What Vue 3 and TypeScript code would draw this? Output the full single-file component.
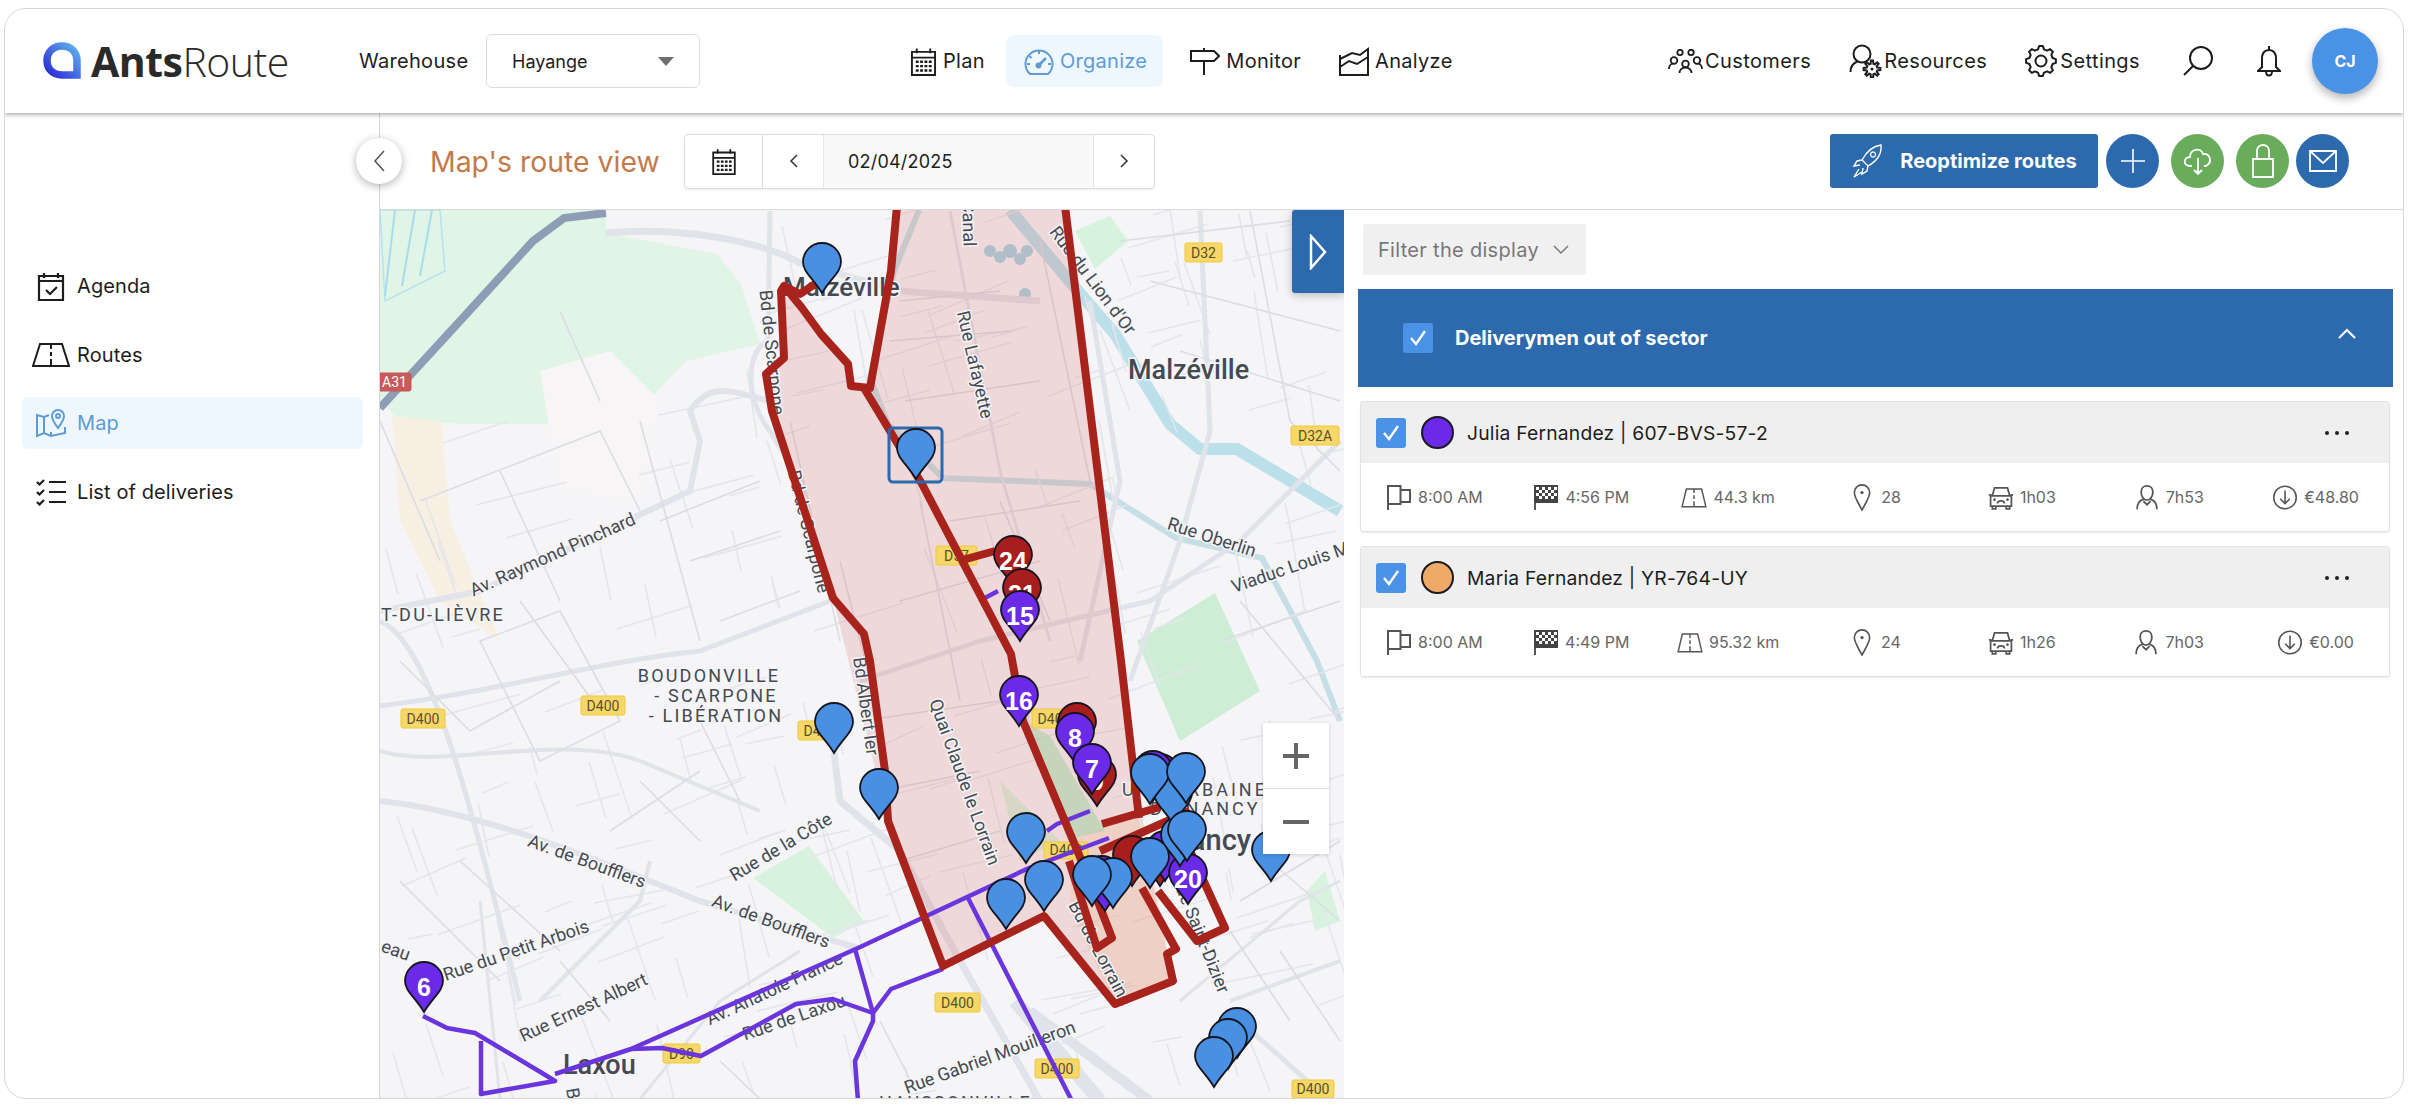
<script setup lang="ts">
interface Pin { x: number; y: number; color: string; label?: string }
interface Road { d: string; w?: number }
interface MapLabel { text: string; x: number; y: number; rot?: number; size?: number; weight?: number; spacing?: number; anchor?: string }
interface Badge { text: string; x: number; y: number; w: number; h: number; red?: boolean }

const BLUE = '#4a90e2'
const PURPLE = '#6a2ae8'
const RED = '#a81e1e'

const sideItems = [
  { id: 'agenda', label: 'Agenda' },
  { id: 'routes', label: 'Routes' },
  { id: 'map', label: 'Map', active: true },
  { id: 'list', label: 'List of deliveries' },
]

const drivers = [
  {
    name: 'Julia Fernandez | 607-BVS-57-2',
    color: '#6a2ae8',
    stats: [
      { icon: 'i-flag', value: '8:00 AM' },
      { icon: 'i-finish', value: '4:56 PM' },
      { icon: 'i-road', value: '44.3 km' },
      { icon: 'i-pin', value: '28' },
      { icon: 'i-car', value: '1h03' },
      { icon: 'i-person', value: '7h53' },
      { icon: 'i-down', value: '€48.80' },
    ],
  },
  {
    name: 'Maria Fernandez | YR-764-UY',
    color: '#eeaa66',
    stats: [
      { icon: 'i-flag', value: '8:00 AM' },
      { icon: 'i-finish', value: '4:49 PM' },
      { icon: 'i-road', value: '95.32 km' },
      { icon: 'i-pin', value: '24' },
      { icon: 'i-car', value: '1h26' },
      { icon: 'i-person', value: '7h03' },
      { icon: 'i-down', value: '€0.00' },
    ],
  },
]

// toothed outline shared by the two gear icons
const gearPath = (cx: number, cy: number, inner: number, outer: number, teeth: number) => {
  const pts: string[] = []
  const step = (Math.PI * 2) / teeth
  for (let i = 0; i < teeth; i++) {
    const a = i * step
    const corners: [number, number][] = [
      [inner, a - step * 0.32],
      [outer, a - step * 0.16],
      [outer, a + step * 0.16],
      [inner, a + step * 0.32],
    ]
    for (const [r, t] of corners) {
      pts.push(`${(cx + r * Math.cos(t)).toFixed(1)} ${(cy + r * Math.sin(t)).toFixed(1)}`)
    }
  }
  return 'M' + pts.join('L') + 'Z'
}

const settingsGear = gearPath(16, 16, 12, 15, 8)
const resourceGear = gearPath(23, 25, 5.5, 8.5, 8)

// the map svg uses the page coordinates as its viewBox, easier to compare
const roads: Road[] = [
  { d: 'M606 232 C680 225 760 240 800 262 L900 290 L1040 300', w: 7 },
  { d: 'M770 210 L768 340 C745 350 745 400 770 430 L800 480', w: 5 },
  { d: 'M380 620 C430 640 470 800 520 1000', w: 5 },
  { d: 'M380 610 L480 590 L690 490 L700 440 L690 410 C710 380 730 390 770 400', w: 6 },
  { d: 'M380 800 C480 810 600 860 700 900 L858 947', w: 6 },
  { d: 'M380 750 C440 770 560 730 640 760 L760 810', w: 4 },
  { d: 'M380 705 C500 690 600 660 700 650 L830 600', w: 5 },
  { d: 'M834 752 L840 800 L900 850 L960 960 L1040 1100', w: 7 },
  { d: 'M1015 1000 L1100 1100', w: 14 },
  { d: 'M1030 1010 L1150 1100', w: 10 },
  { d: 'M1090 300 L1120 480 L1080 660', w: 5 },
  { d: 'M1200 210 L1210 430 L1180 540 L1130 680', w: 5 },
  { d: 'M1340 440 L1240 540 L1150 600 L980 640 L860 680', w: 5 },
  { d: 'M950 210 L1000 470 L1050 640', w: 3 },
  { d: 'M1230 1000 L1340 960', w: 4 },
  { d: 'M1240 1020 L1330 1100', w: 5 },
  { d: 'M1180 1000 L1300 900 L1340 880', w: 3 },
  { d: 'M540 1000 L640 900 L650 860', w: 4 },
  { d: 'M480 900 L500 1098', w: 3 },
  { d: 'M640 1098 L720 1000 L800 950', w: 3 },
]

const thinRoads = [
  'M480 640 L560 610 L620 720 L540 760Z', 'M520 600 L600 710', 'M400 660 L470 730 L560 680',
  'M640 420 L700 640', 'M660 520 L760 480', 'M690 560 L780 530', 'M720 620 L800 590',
  'M420 500 L600 430 L640 510', 'M440 560 L380 420', 'M500 470 L560 600', 'M600 400 L560 310',
  'M1120 240 L1290 220', 'M1150 280 L1340 330', 'M1180 350 L1340 400', 'M1250 210 L1290 420 L1340 470',
  'M1240 600 L1340 720', 'M1220 640 L1340 600', 'M1270 860 L1340 920', 'M1240 900 L1340 840',
  'M1230 930 L1290 1020', 'M1280 950 L1340 1040', 'M700 720 L740 800', 'M640 780 L700 840', 'M700 770 L610 830',
  'M460 860 L560 950', 'M400 880 L500 980', 'M560 960 L610 1020', 'M720 1060 L760 1098', 'M880 1020 L920 1098',
  'M900 300 L1000 290', 'M890 340 L1010 330', 'M905 400 L1040 380', 'M950 520 L1080 500', 'M900 600 L1040 560',
  'M860 720 L1000 700', 'M880 790 L980 770', 'M900 860 L1000 830', 'M840 560 L880 720', 'M920 500 L960 700',
  'M1040 240 L1090 480', 'M1000 500 L1050 620', 'M790 420 L840 640',
]

// small side streets, seeded so that every run draws the same map
const buildStreets = () => {
  let seed = 4217
  const rnd = () => {
    seed = (seed * 16807) % 2147483647
    return seed / 2147483647
  }
  const out: string[] = []
  for (let i = 0; i < 260; i++) {
    const x = 380 + rnd() * 964
    const y = 209 + rnd() * 889
    const angle = ((rnd() > 0.5 ? -24 : 68) + rnd() * 14) * (Math.PI / 180)
    const len = 24 + rnd() * 70
    if (x < 720 && y < 410) continue
    out.push(`M${x.toFixed(0)} ${y.toFixed(0)}L${(x + Math.cos(angle) * len).toFixed(0)} ${(y + Math.sin(angle) * len).toFixed(0)}`)
  }
  return out
}
const streets = buildStreets()

const labels: MapLabel[] = [
  { text: 'Malzéville', x: 1128, y: 378, size: 27, weight: 500 },
  { text: 'Malzéville', x: 783, y: 295, size: 26, weight: 500 },
  { text: 'Laxou', x: 563, y: 1073, size: 27, weight: 500 },
  { text: 'Nancy', x: 1251, y: 849, size: 29, weight: 500, anchor: 'end' },
  { text: 'BOUDONVILLE', x: 709, y: 681, size: 18, spacing: 2.2, anchor: 'middle' },
  { text: '- SCARPONE', x: 716, y: 701, size: 18, spacing: 2.2, anchor: 'middle' },
  { text: '- LIBÉRATION', x: 716, y: 721, size: 18, spacing: 2.2, anchor: 'middle' },
  { text: 'T-DU-LIÈVRE', x: 505, y: 620, size: 18, spacing: 2.2, anchor: 'end' },
  { text: 'UNE URBAINE', x: 1122, y: 795, size: 18, spacing: 3 },
  { text: 'DE NANCY', x: 1150, y: 814, size: 18, spacing: 3 },
  { text: 'HAUSSONVILLE', x: 879, y: 1108, size: 18, spacing: 2 },
  { text: 'Av. Raymond Pinchard', x: 555, y: 559, rot: -24, anchor: 'middle' },
  { text: 'Rue Oberlin', x: 1210, y: 542, rot: 18, anchor: 'middle' },
  { text: 'Viaduc Louis Marin', x: 1234, y: 592, rot: -19 },
  { text: 'Rue Lafayette', x: 969, y: 365, rot: 77, anchor: 'middle' },
  { text: 'Bd de Scarpone', x: 766, y: 352, rot: 84, anchor: 'middle' },
  { text: 'Bd de Scarpone', x: 803, y: 532, rot: 76, anchor: 'middle' },
  { text: 'Bd Albert Ier', x: 860, y: 706, rot: 82, anchor: 'middle' },
  { text: "Rue du Lion d'Or", x: 1088, y: 283, rot: 53, anchor: 'middle' },
  { text: 'Canal', x: 962, y: 200, rot: 88 },
  { text: 'Quai Claude le Lorrain', x: 959, y: 783, rot: 70, anchor: 'middle' },
  { text: 'Av. de Boufflers', x: 585, y: 866, rot: 20, anchor: 'middle' },
  { text: 'Av. de Boufflers', x: 769, y: 926, rot: 20, anchor: 'middle' },
  { text: 'Rue de la Côte', x: 784, y: 851, rot: -31, anchor: 'middle' },
  { text: 'Rue du Petit Arbois', x: 518, y: 955, rot: -19, anchor: 'middle' },
  { text: 'Rue Ernest Albert', x: 586, y: 1012, rot: -25, anchor: 'middle' },
  { text: 'Av. Anatole France', x: 777, y: 993, rot: -25, anchor: 'middle' },
  { text: 'Rue de Laxou', x: 796, y: 1022, rot: -19, anchor: 'middle' },
  { text: 'Rue Gabriel Mouilleron', x: 992, y: 1062, rot: -20, anchor: 'middle' },
  { text: 'Rue Saint-Dizier', x: 1195, y: 935, rot: 68, anchor: 'middle' },
  { text: 'Bd de Lorraine', x: 1095, y: 955, rot: 62, anchor: 'middle' },
  { text: 'eau', x: 380, y: 950, rot: 20 },
  { text: 'Bd', x: 566, y: 1088, rot: 80 },
]

const badges: Badge[] = [
  { text: 'D32', x: 1185, y: 242, w: 37, h: 19 },
  { text: 'D32A', x: 1291, y: 425, w: 48, h: 19 },
  { text: 'A31', x: 378, y: 372, w: 33, h: 18, red: true },
  { text: 'D57', x: 936, y: 545, w: 41, h: 19 },
  { text: 'D400', x: 401, y: 708, w: 44, h: 19 },
  { text: 'D400', x: 581, y: 695, w: 44, h: 19 },
  { text: 'D400', x: 798, y: 720, w: 44, h: 19 },
  { text: 'D400', x: 1044, y: 841, w: 44, h: 17 },
  { text: 'D400', x: 1032, y: 708, w: 44, h: 19 },
  { text: 'D400', x: 935, y: 992, w: 45, h: 19 },
  { text: 'D90', x: 663, y: 1043, w: 37, h: 19 },
  { text: 'D400', x: 1035, y: 1058, w: 44, h: 19 },
  { text: 'D400', x: 1292, y: 1079, w: 42, h: 18 },
]

// drawn in this order, the last ones end up on top
const pins: Pin[] = [
  { x: 1013, y: 585, color: RED, label: '24' },
  { x: 1022, y: 618, color: RED, label: '21' },
  { x: 1020, y: 640, color: PURPLE, label: '15' },
  { x: 1077, y: 752, color: RED },
  { x: 1019, y: 725, color: PURPLE, label: '16' },
  { x: 1097, y: 805, color: RED, label: '9' },
  { x: 1075, y: 762, color: PURPLE, label: '8' },
  { x: 1092, y: 793, color: PURPLE, label: '7' },
  { x: 1160, y: 803, color: PURPLE },
  { x: 1153, y: 800, color: PURPLE },
  { x: 1132, y: 885, color: RED },
  { x: 1160, y: 885, color: RED },
  { x: 1102, y: 905, color: PURPLE },
  { x: 1105, y: 910, color: PURPLE },
  { x: 1165, y: 880, color: PURPLE },
  { x: 1188, y: 903, color: PURPLE, label: '20' },
  { x: 1180, y: 865, color: BLUE },
  { x: 1173, y: 823, color: BLUE },
  { x: 1150, y: 803, color: BLUE },
  { x: 1186, y: 802, color: BLUE },
  { x: 1187, y: 860, color: BLUE },
  { x: 1150, y: 887, color: BLUE },
  { x: 822, y: 292, color: BLUE },
  { x: 916, y: 478, color: BLUE },
  { x: 834, y: 752, color: BLUE },
  { x: 879, y: 818, color: BLUE },
  { x: 1026, y: 862, color: BLUE },
  { x: 1006, y: 928, color: BLUE },
  { x: 1044, y: 910, color: BLUE },
  { x: 1113, y: 907, color: BLUE },
  { x: 1092, y: 905, color: BLUE },
  { x: 1271, y: 880, color: BLUE },
  { x: 1237, y: 1057, color: BLUE },
  { x: 1228, y: 1068, color: BLUE },
  { x: 1214, y: 1086, color: BLUE },
  { x: 424, y: 1011, color: PURPLE, label: '6' },
]

const purpleRoutes = [
  'M423 1015 L447 1027 L475 1032 L542 1072 L555 1080 L481 1093 L481 1040',
  'M555 1073 L631 1048 L858 947 L1029 867 L1109 837',
  'M631 1048 L662 1047 L701 1055 L796 1003 L833 998 L873 1012 L891 988 L943 968',
  'M855 948 L873 1012 L873 1020 L855 1060 L858 1100',
  'M968 897 L1072 1100',
  'M1047 830 L1057 823 L1090 810',
  'M983 598 L998 590',
]

const redRoutes = [
  'M897 205 L891 270 L870 387 L851 385 L848 363 L821 333 L802 307 L784 285 L781 290 L784 357 L766 373 L772 410 L833 597 L864 633 L870 660 L885 770 L888 820 L943 965 L1044 915 L1115 1003 L1173 980 L1167 953 L1176 948 L1142 887',
  'M1065 205 L1121 660 L1139 817',
  'M864 387 L922 483 L1011 653 L1023 720 L1072 837 L1090 880 L1112 937 L1097 947 L1069 860',
  'M1102 823 L1160 806',
  'M1100 850 L1190 810',
  'M1158 890 L1197 940 L1225 927 L1190 850',
  'M959 560 L995 550',
  'M784 285 L800 293 L815 283',
]
</script>

<template>
  <div class="window">
    <svg class="defs" width="0" height="0">
      <defs>
        <symbol id="i-calendar" viewBox="0 0 28 30">
          <path d="M2 5h24v24H2zM2 5h24v6H2zM7 1.500v5M21 1.500v5" fill="none" stroke="currentColor" stroke-width="2" />
          <path d="M6 14h3v2.500H6zM10.500 14h3v2.500h-3zM15 14h3v2.500h-3zM19.500 14h3v2.500h-3zM6 18.500h3V21H6zM10.500 18.500h3V21h-3zM15 18.500h3V21h-3zM19.500 18.500h3V21h-3zM6 23h3v2.500H6zM10.500 23h3v2.500h-3zM15 23h3v2.500h-3zM19.500 23h3v2.500h-3z" fill="currentColor" />
        </symbol>
        <symbol id="i-flag" viewBox="0 0 26 27">
          <path d="M2 26V2h12.500v18H2M14.500 6H24v12H14.500" fill="none" stroke="currentColor" stroke-width="2" />
        </symbol>
        <symbol id="i-finish" viewBox="0 0 26 27">
          <path d="M2 26V2" fill="none" stroke="currentColor" stroke-width="2" />
          <path d="M1 1h24v18H1z" fill="#444" />
          <path d="M3 3h3v3H3zM9 3h3v3H9zM15 3h3v3h-3zM21 3h3v3h-3zM6 6h3v3H6zM12 6h3v3h-3zM18 6h3v3h-3zM3 9h3v3H3zM9 9h3v3H9zM15 9h3v3h-3zM21 9h3v3h-3zM6 12h3v3H6zM12 12h3v3h-3zM18 12h3v3h-3z" fill="#fff" />
        </symbol>
        <symbol id="i-road" viewBox="0 0 34 26">
          <path d="M1.500 25L7 2h20l5.500 23zM17 3v4M17 10v5M17 18v7" fill="none" stroke="currentColor" stroke-width="1.900" />
        </symbol>
        <symbol id="i-pin" viewBox="0 0 20 30">
          <path d="M10 29C6 21 1.500 15 1.500 9.500a8.500 8.500 0 0 1 17 0C18.500 15 14 21 10 29z" fill="none" stroke="currentColor" stroke-width="1.800" />
          <circle cx="10" cy="9.500" r="1.800" fill="currentColor" />
        </symbol>
        <symbol id="i-car" viewBox="0 0 30 28">
          <path d="M5 12l2.500-9h15L25 12M3 12h24v12H3zM5 24v3h4v-3M21 24v3h4v-3M1 11h3M26 11h3M11 21c0-4 8-4 8 0" fill="none" stroke="currentColor" stroke-width="2" />
          <circle cx="7.500" cy="16.500" r="1.500" fill="currentColor" /><circle cx="22.500" cy="16.500" r="1.500" fill="currentColor" />
        </symbol>
        <symbol id="i-person" viewBox="0 0 26 30">
          <path d="M13 2c-4 0-6.500 3-6.500 7S9 18 13 18s6.500-5 6.500-9S17 2 13 2zM9 17c-4 1-7 4-7 11M17 17c4 1 7 4 7 11M9 19l4 4 4-4" fill="none" stroke="currentColor" stroke-width="2" />
        </symbol>
        <symbol id="i-down" viewBox="0 0 30 30">
          <circle cx="15" cy="15" r="13" fill="none" stroke="currentColor" stroke-width="1.800" />
          <path d="M15 7v15M9.500 16.500L15 22l5.500-5.500" fill="none" stroke="currentColor" stroke-width="1.800" />
        </symbol>
      </defs>
    </svg>

    <header class="topbar">
      <div class="logo">
        <svg width="40" height="38" viewBox="0 0 40 38">
          <defs>
            <linearGradient id="logoGrad" x1="0" y1="1" x2="1" y2="0">
              <stop offset="0" stop-color="#2a27d6" />
              <stop offset="1" stop-color="#5fb3ec" />
            </linearGradient>
          </defs>
          <path d="M20 4C11 4 5 10 5 18.500S11 33 20 33h15V18.500C35 10 29 4 20 4z" fill="none" stroke="url(#logoGrad)" stroke-width="7.500" />
        </svg>
        <span class="logo-text"><b>Ants</b>Route</span>
      </div>
      <span class="warehouse-label">Warehouse</span>
      <div class="select">
        <span>Hayange</span>
        <i class="caret"></i>
      </div>

      <nav class="main-nav">
        <a class="nav-item">
          <svg width="27" height="29"><use href="#i-calendar" /></svg>
          Plan
        </a>
        <a class="nav-item active">
          <svg width="30" height="30" viewBox="0 0 30 30" fill="none" stroke="currentColor" stroke-width="2">
            <path d="M6 28h18a13.500 13.500 0 1 0-18 0z" />
            <path d="M15 19l7-7" stroke-width="2.500" />
            <circle cx="14.500" cy="19.500" r="2" fill="currentColor" />
            <path d="M15 5v3M5.500 10l2 2M3 18h3M24 18h3" />
          </svg>
          Organize
        </a>
        <a class="nav-item">
          <svg width="30" height="28" viewBox="0 0 30 28" fill="none" stroke="currentColor" stroke-width="2">
            <path d="M1 4h23l5 5-5 5H1zM14 1v3M14 14v14" />
          </svg>
          Monitor
        </a>
        <a class="nav-item">
          <svg width="30" height="29" viewBox="0 0 30 29" fill="none" stroke="currentColor" stroke-width="2">
            <path d="M1 8v20h28V2l-8 6-8-2-12 6M1 20l9-6 8 3 11-7" />
          </svg>
          Analyze
        </a>
      </nav>

      <nav class="side-nav">
        <a class="nav-item">
          <svg width="35" height="25" viewBox="0 0 35 25" fill="none" stroke="#1d1d1d" stroke-width="1.800">
            <circle cx="12" cy="3.500" r="2.700" /><circle cx="23" cy="3.500" r="2.700" />
            <circle cx="6" cy="11.500" r="3.300" /><circle cx="29" cy="11.500" r="3.300" /><circle cx="17.500" cy="15" r="3.300" />
            <path d="M1 20c0-3 2-5 4-5.500M34 20c0-3-2-5-4-5.500M11.500 24c0-3 2.500-5.500 6-5.500s6 2.500 6 5.500" />
          </svg>
          Customers
        </a>
        <a class="nav-item">
          <svg width="33" height="34" viewBox="0 0 33 34" fill="none" stroke="#1d1d1d" stroke-width="2">
            <circle cx="13" cy="10" r="8.500" />
            <path d="M1.500 28c0-6 3-9 7-10.500" />
            <path :d="resourceGear" stroke-width="2" />
            <circle cx="23" cy="25" r="1.500" fill="#1d1d1d" stroke="none" />
          </svg>
          Resources
        </a>
        <a class="nav-item">
          <svg width="33" height="32" viewBox="0 0 33 32" fill="none" stroke="#1d1d1d" stroke-width="2" stroke-linejoin="round">
            <path :d="settingsGear" />
            <circle cx="16" cy="16" r="5.500" />
          </svg>
          Settings
        </a>
        <svg class="tool-icon" width="32" height="32" viewBox="0 0 32 32" fill="none" stroke="#1d1d1d" stroke-width="2">
          <circle cx="19" cy="13" r="11" /><path d="M11 21L2 30" />
        </svg>
        <svg class="tool-icon bell" width="24" height="33" viewBox="0 0 24 33" fill="none" stroke="#1d1d1d" stroke-width="2">
          <path d="M12 1v4M12 5c-5 0-7 4-7 9v8l-4 4h22l-4-4v-8c0-5-2-9-7-9zM9 26c0 6 6 6 6 0" />
        </svg>
        <div class="avatar">CJ</div>
      </nav>
    </header>

    <div class="body">
      <aside class="sidebar">
        <a v-for="item in sideItems" :key="item.id" class="side-item" :class="{ active: item.active }">
          <span class="side-icon">
            <svg v-if="item.id === 'agenda'" width="28" height="29" viewBox="0 0 28 29" fill="none" stroke="currentColor" stroke-width="2.200">
              <path d="M2 4h24v24H2zM2 9h24M7 1v5M21 1v5" /><path d="M9 18l4 4 7-7" />
            </svg>
            <svg v-else-if="item.id === 'routes'" width="38" height="25" viewBox="0 0 38 25" fill="none" stroke="currentColor" stroke-width="2">
              <path d="M1 24L8 2h22l7 22zM19 3v4M19 10v4M19 17v7" />
            </svg>
            <svg v-else-if="item.id === 'map'" width="30" height="30" viewBox="0 0 30 30" fill="none" stroke="currentColor" stroke-width="2">
              <path d="M13 7L8 9 1 7v21l7-3 7 3 14-3v-6M8 9v16M15 24v4" />
              <path d="M22 20c-3-4-6-8-6-12a6 6 0 0 1 12 0c0 4-3 8-6 12z" /><circle cx="22" cy="8" r="2" />
            </svg>
            <svg v-else width="30" height="27" viewBox="0 0 30 27" fill="none" stroke="currentColor" stroke-width="2.200">
              <path d="M1 3l2.500 2.500L8 1M1 13l2.500 2.500L8 11M1 23l2.500 2.500L8 21M13 3h17M13 13h17M13 23h17" />
            </svg>
          </span>
          {{ item.label }}
        </a>
      </aside>

      <main class="main">
        <button class="collapse">
          <svg width="12" height="22" viewBox="0 0 12 22" fill="none" stroke="#555" stroke-width="1.500"><path d="M11 1L2 11l9 10" /></svg>
        </button>
        <div class="toolbar">
          <h1 class="title">Map's route view</h1>
          <div class="date-group">
            <span class="date-cell cal"><svg width="26" height="27"><use href="#i-calendar" /></svg></span>
            <span class="date-cell arrow">
              <svg width="9" height="14" viewBox="0 0 9 14" fill="none" stroke="#333" stroke-width="1.500"><path d="M8 1L2 7l6 6" /></svg>
            </span>
            <span class="date-value">02/04/2025</span>
            <span class="date-cell arrow">
              <svg width="9" height="14" viewBox="0 0 9 14" fill="none" stroke="#333" stroke-width="1.500"><path d="M1 1l6 6-6 6" /></svg>
            </span>
          </div>
          <div class="actions">
            <button class="primary">
              <svg width="34" height="36" viewBox="0 0 34 36" fill="none" stroke="#fff" stroke-width="1.400">
                <path d="M30 2c-8 1-14 6-19 15l6 6c9-5 14-11 13-21zM11 17l-5 1-3 5 6-1M17 23l-1 5-5 3 1-6M8 26l-5 8 8-5M22 9a2.500 2.500 0 1 0 .1 0" />
              </svg>
              Reoptimize routes
            </button>
            <button class="round blue">
              <svg width="28" height="28" viewBox="0 0 28 28" stroke="#fff" stroke-width="1.600"><path d="M14 2v24M2 14h24" /></svg>
            </button>
            <button class="round green">
              <svg width="30" height="30" viewBox="0 0 30 30" fill="none" stroke="#fff" stroke-width="1.800">
                <path d="M9 20H7c-7 0-7-9 0-9 0-8 11-10 13-3 7-1 10 8 3 12h-2M15 12v16M11 24l4 4 4-4" />
              </svg>
            </button>
            <button class="round green">
              <svg width="24" height="36" viewBox="0 0 24 36" fill="none" stroke="#fff" stroke-width="1.800">
                <path d="M2 16h20v18H2zM6 16V8c0-8 12-8 12 0v8" />
              </svg>
            </button>
            <button class="round blue mail">
              <svg width="28" height="24" viewBox="0 0 28 24" fill="none" stroke="#fff" stroke-width="1.800">
                <path d="M1 2h26v20H1zM1 2l13 12L27 2" />
              </svg>
            </button>
          </div>
        </div>

        <div class="content">
          <section class="map">
            <svg class="map-svg" width="964" height="889" viewBox="380 209 964 889">
              <rect x="380" y="209" width="964" height="889" fill="#f5f4f6" />
              <!-- land use -->
              <path d="M380 209H606V232L717 253L741 283L760 343L686 360L643 405L560 423L470 423L400 420L380 400Z" fill="#e0f5e6" />
              <path d="M392 415L441 420L450 520L500 640L440 600L400 520Z" fill="#f7f0e2" />
              <path d="M540 370L610 350L660 400L640 500L560 490Z" fill="#f7f5f5" />
              <path d="M753 877L809 845L864 920L833 937Z" fill="#d7f3de" />
              <path d="M1137 640L1215 592L1260 690L1180 740Z" fill="#cdeed5" />
              <path d="M1075 230L1110 215L1128 240L1095 268Z" fill="#d7f3de" />
              <path d="M1307 890L1325 870L1340 920L1315 930Z" fill="#d7f3de" />
              <path d="M1000 780L1060 840L1020 860Z" fill="#d7f3de" />
              <path d="M380 209H440L445 270L385 300Z" fill="none" stroke="#b7e1ee" stroke-width="1.500" />
              <path d="M395 209L385 295M415 209L402 285M432 209L420 275" stroke="#a8dcec" stroke-width="2" />
              <!-- water -->
              <path d="M1010 209L1072 283L1115 333L1170 423L1200 448H1237L1340 510" fill="none" stroke="#bce0ea" stroke-width="12" />
              <path d="M919 209L894 270L870 377L888 423L943 477L1090 483L1176 537L1262 557L1317 660L1340 720" fill="none" stroke="#c6dfe6" stroke-width="6" />
              <circle cx="990" cy="250" r="6" fill="#a8d4e2" /><circle cx="1000" cy="256" r="6" fill="#a8d4e2" /><circle cx="1010" cy="250" r="7" fill="#a8d4e2" /><circle cx="1020" cy="258" r="6" fill="#a8d4e2" /><circle cx="1027" cy="250" r="6" fill="#a8d4e2" /><circle cx="1025" cy="293" r="6" fill="#a8d4e2" />
              <!-- roads -->
              <path v-for="(d, i) in streets" :key="'s' + i" :d="d" fill="none" stroke="#e4e6eb" stroke-width="1.600" />
              <path d="M380 407L460 320L533 240L564 217L606 212" fill="none" stroke="#8d9db5" stroke-width="8" />
              <path v-for="(r, i) in roads" :key="'r' + i" :d="r.d" fill="none" stroke="#e0e3e9" :stroke-width="r.w" stroke-linejoin="round" />
              <path v-for="(d, i) in thinRoads" :key="'t' + i" :d="d" fill="none" stroke="#dadde3" stroke-width="1.600" />

              <!-- sector -->
              <path d="M897 209L1065 209L1121 660L1139 817L1173 980L1115 1003L1044 915L943 965L888 820L833 597L772 410L766 373L784 357L784 285L848 363L851 385L870 387Z" fill="#d24a44" fill-opacity=".16" />
              <path d="M1072 837L1142 815L1173 980L1115 1003L1070 910Z" fill="#efb47a" fill-opacity=".22" />
              <path d="M1023 720L1050 735L1105 830L1072 837Z" fill="#9fcf9f" fill-opacity=".5" />

              <g class="map-labels">
                <text v-for="(l, i) in labels" :key="'l' + i"
                  :x="l.x" :y="l.y"
                  :font-size="l.size || 18"
                  :font-weight="l.weight || 400"
                  :letter-spacing="l.spacing || 0"
                  :text-anchor="l.anchor || 'start'"
                  :transform="l.rot ? `rotate(${l.rot} ${l.x} ${l.y})` : undefined"
                >{{ l.text }}</text>
              </g>
              <g v-for="(b, i) in badges" :key="'b' + i">
                <rect :x="b.x" :y="b.y" :width="b.w" :height="b.h" rx="2" :fill="b.red ? '#c9595a' : '#f6d767'" :stroke="b.red ? '#c9595a' : '#f0c93c'" />
                <text :x="b.x + b.w / 2" :y="b.y + b.h - 4.500" class="badge-text" :class="{ light: b.red }">{{ b.text }}</text>
              </g>

              <path v-for="(d, i) in purpleRoutes" :key="'p' + i" :d="d" fill="none" stroke="#6a35dc" stroke-width="4.500" stroke-linejoin="round" />
              <path v-for="(d, i) in redRoutes" :key="'rr' + i" :d="d" fill="none" stroke="#a9231d" stroke-width="8" stroke-linejoin="round" />

              <rect x="889" y="427" width="53" height="54" rx="4" fill="none" stroke="#2d69ad" stroke-width="3" />

              <g v-for="(p, i) in pins" :key="'pin' + i" :transform="`translate(${p.x} ${p.y})`">
                <path d="M0 0C-9 -15 -19 -21 -19 -31A19 19 0 0 1 19 -31C19 -21 9 -15 0 0Z" :fill="p.color" stroke="#15151f" stroke-width="1.800" />
                <text v-if="p.label" class="pin-text" y="-16">{{ p.label }}</text>
              </g>
            </svg>

            <button class="panel-toggle">
              <svg width="18" height="36" viewBox="0 0 18 36" fill="none" stroke="#fff" stroke-width="2.500"><path d="M2 2l14 16L2 34z" /></svg>
            </button>
            <div class="zoom-ctrl">
              <button class="zoom-btn">
                <svg width="28" height="28" viewBox="0 0 28 28" stroke="#666" stroke-width="4"><path d="M14 1v26M1 14h26" /></svg>
              </button>
              <button class="zoom-btn">
                <svg width="28" height="4" viewBox="0 0 28 4" stroke="#666" stroke-width="4"><path d="M1 2h26" /></svg>
              </button>
            </div>
          </section>

          <section class="panel">
            <div class="filter">
              Filter the display
              <svg width="16" height="10" viewBox="0 0 16 10" fill="none" stroke="#777" stroke-width="1.500"><path d="M1 1l7 7 7-7" /></svg>
            </div>
            <div class="sector-bar">
              <span class="check">
                <svg width="22" height="20" viewBox="0 0 22 20" fill="none" stroke="#fff" stroke-width="2.400"><path d="M4 10l5 6L18 3" /></svg>
              </span>
              <span class="sector-name">Deliverymen out of sector</span>
              <svg class="sector-chevron" width="20" height="12" viewBox="0 0 20 12" fill="none" stroke="#fff" stroke-width="2.200"><path d="M2 10l8-8 8 8" /></svg>
            </div>

            <article v-for="d in drivers" :key="d.name" class="driver">
              <div class="driver-head">
                <span class="check">
                  <svg width="22" height="20" viewBox="0 0 22 20" fill="none" stroke="#fff" stroke-width="2.400"><path d="M4 10l5 6L18 3" /></svg>
                </span>
                <span class="dot" :style="{ background: d.color }"></span>
                <span class="driver-name">{{ d.name }}</span>
                <span class="more">
                  <i></i><i></i><i></i>
                </span>
              </div>
              <div class="stats">
                <div v-for="s in d.stats" :key="s.icon" class="stat">
                  <svg class="stat-icon" :class="s.icon" width="26" height="27"><use :href="'#' + s.icon" /></svg>
                  <span>{{ s.value }}</span>
                </div>
              </div>
            </article>
          </section>
        </div>
      </main>
    </div>
  </div>
</template>

<style>
html, body {
  margin: 0;
  background: #fff;
}
</style>

<style scoped>
.window {
  box-sizing: border-box;
  width: 2400px;
  height: 1091px;
  margin: 8px 0 0 4px;
  border: 1px solid #d6d6d6;
  border-radius: 22px;
  overflow: hidden;
  background: #fff;
  color: #1d1d1d;
  font-family: Inter, "Liberation Sans", sans-serif;
  font-size: 18px;
  display: flex;
  flex-direction: column;
}

.defs {
  position: absolute;
}

.topbar {
  height: 104px;
  flex: none;
  display: flex;
  align-items: center;
  padding-left: 37px;
  box-shadow: 0 2px 4px rgba(0, 0, 0, 0.3);
  position: relative;
  z-index: 3;
  background: #fff;
}

.logo {
  display: flex;
  align-items: center;
  gap: 9px;
  width: 317px;
}

.logo-text {
  font-family: "Open Sans", sans-serif;
  font-size: 41px;
  font-weight: 300;
  letter-spacing: -0.5px;
  color: #2a2a2a;
}

.logo-text b {
  font-weight: 700;
}

.warehouse-label {
  width: 127px;
  font-size: 20px;
  letter-spacing: 0.3px;
}

.select {
  box-sizing: border-box;
  width: 214px;
  height: 54px;
  border: 1px solid #dcdcdc;
  border-radius: 6px;
  display: flex;
  align-items: center;
  justify-content: space-between;
  padding: 0 25px;
}

.caret {
  width: 0;
  height: 0;
  border: 8px solid transparent;
  border-top: 9px solid #707070;
  border-bottom: 0;
}

.main-nav {
  display: flex;
  align-items: center;
  margin-left: 210px;
  font-size: 20px;
  letter-spacing: 0.3px;
}

.nav-item {
  display: flex;
  align-items: center;
  gap: 6px;
  height: 52px;
  white-space: nowrap;
}

.main-nav .nav-item {
  padding: 0 16px 0 18px;
}

.main-nav .nav-item:first-child {
  padding: 0 21px 0 0;
}

.main-nav .nav-item:nth-child(3) {
  padding: 0 38px 0 27px;
}

.main-nav .nav-item:last-child {
  padding: 0;
}

.nav-item.active {
  background: #eef7fe;
  border-radius: 8px;
  color: #5f9bd4;
}

.side-nav {
  display: flex;
  align-items: center;
  margin-left: auto;
  padding-right: 25px;
  font-size: 20px;
  letter-spacing: 0.4px;
}

.side-nav .nav-item {
  margin-right: 38px;
  gap: 2px;
}

.side-nav .nav-item:nth-child(3) {
  margin-right: 42px;
}

.tool-icon {
  margin-right: 43px;
}

.tool-icon.bell {
  margin-right: 31px;
}

.avatar {
  width: 66px;
  height: 66px;
  border-radius: 50%;
  background: #4a92e6;
  color: #fff;
  font-size: 16px;
  font-weight: 700;
  letter-spacing: 0;
  display: flex;
  align-items: center;
  justify-content: center;
  box-shadow: 0 4px 10px rgba(0, 0, 0, 0.3);
}

.body {
  flex: 1;
  display: flex;
  min-height: 0;
}

.sidebar {
  box-sizing: border-box;
  width: 375px;
  flex: none;
  border-right: 1px solid #d6d6d6;
  padding: 147px 16px 0 17px;
  display: flex;
  flex-direction: column;
  gap: 16.700px;
}

.side-item {
  height: 52px;
  border-radius: 6px;
  display: flex;
  align-items: center;
  font-size: 20px;
  letter-spacing: 0.1px;
}

.side-item.active {
  background: #eef7fe;
  color: #5f9bd4;
}

.side-icon {
  width: 55px;
  display: flex;
  justify-content: center;
  padding-left: 3px;
  box-sizing: border-box;
  flex: none;
}

.main {
  flex: 1;
  min-width: 0;
  display: flex;
  flex-direction: column;
  position: relative;
}

.collapse {
  position: absolute;
  left: -24px;
  top: 25px;
  width: 46px;
  height: 46px;
  border-radius: 50%;
  border: 0;
  background: #fff;
  box-shadow: 0 2px 8px rgba(0, 0, 0, 0.3);
  display: flex;
  align-items: center;
  justify-content: center;
  z-index: 2;
}

.toolbar {
  box-sizing: border-box;
  height: 97px;
  flex: none;
  border-bottom: 1px solid #d9d9d9;
  display: flex;
  align-items: center;
  padding-left: 50px;
}

.title {
  margin: 0;
  width: 254px;
  font-size: 28.400px;
  font-weight: 400;
  color: #c27a4c;
  white-space: nowrap;
}

.date-group {
  box-sizing: border-box;
  width: 471px;
  height: 55px;
  border: 1px solid #dcdcdc;
  border-radius: 4px;
  display: flex;
  box-shadow: 0 1px 2px rgba(0, 0, 0, 0.08);
}

.date-cell {
  display: flex;
  align-items: center;
  justify-content: center;
  width: 60px;
  flex: none;
}

.date-cell.cal {
  width: 77px;
  border-right: 1px solid #dcdcdc;
}

.date-value {
  flex: 1;
  display: flex;
  align-items: center;
  padding-left: 24px;
  background: #f9f9f9;
  border-left: 1px solid #e4e4e4;
  border-right: 1px solid #e4e4e4;
  letter-spacing: 0.2px;
}

.actions {
  margin-left: auto;
  margin-right: 54px;
  display: flex;
  align-items: center;
  gap: 12px;
}

.actions button {
  border: 0;
  height: 54px;
  display: flex;
  align-items: center;
  justify-content: center;
  color: #fff;
  font-family: inherit;
  padding: 0;
}

.primary {
  width: 268px;
  gap: 15px;
  background: #2d69ad;
  border-radius: 3px;
  font-size: 20px;
  font-weight: 700;
  margin-right: -4px;
}

.round {
  width: 53px;
  border-radius: 50%;
}

.round.blue {
  background: #2d69ad;
}

.round.green {
  background: #68ac5c;
}

.round.mail {
  margin-left: -5px;
}

.content {
  flex: 1;
  min-height: 0;
  display: flex;
}

.map {
  width: 964px;
  flex: none;
  position: relative;
  overflow: hidden;
}

.map-svg {
  display: block;
}

.map-labels text {
  font-family: Roboto, Inter, sans-serif;
  fill: #444a52;
  paint-order: stroke;
  stroke: #f5f4f6;
  stroke-width: 3px;
}

.badge-text {
  font-family: Roboto, sans-serif;
  font-size: 14px;
  text-anchor: middle;
  fill: #5a5030;
}

.badge-text.light {
  fill: #fff;
}

.pin-text {
  font-family: "Liberation Sans", sans-serif;
  font-size: 25px;
  font-weight: 700;
  text-anchor: middle;
  fill: #fff;
}

.panel-toggle {
  position: absolute;
  top: 0;
  right: 0;
  width: 52px;
  height: 83px;
  border: 0;
  border-radius: 3px 0 0 3px;
  background: #2d69ad;
  display: flex;
  align-items: center;
  justify-content: center;
  box-shadow: 0 2px 8px rgba(0, 0, 0, 0.25);
}

.zoom-ctrl {
  position: absolute;
  top: 513px;
  left: 883px;
  width: 66px;
  height: 131px;
  background: #fff;
  display: flex;
  flex-direction: column;
  box-shadow: 0 1px 4px rgba(0, 0, 0, 0.15);
}

.zoom-btn {
  flex: 1;
  border: 0;
  background: none;
  display: flex;
  align-items: center;
  justify-content: center;
}

.zoom-btn + .zoom-btn {
  border-top: 1px solid #ddd;
}

.panel {
  flex: 1;
  min-width: 0;
  padding: 14px 10px 0 14px;
  box-sizing: border-box;
}

.filter {
  box-sizing: border-box;
  width: 223px;
  height: 51px;
  margin-left: 5px;
  padding-left: 15px;
  background: #f0f0f0;
  color: #777;
  border-radius: 2px;
  display: flex;
  align-items: center;
  gap: 14px;
  font-size: 20px;
  letter-spacing: 0.3px;
  white-space: nowrap;
}

.sector-bar {
  margin-top: 14px;
  height: 98px;
  background: #2d69ad;
  color: #fff;
  display: flex;
  align-items: center;
  padding-left: 45px;
}

.check {
  width: 30px;
  height: 30px;
  border-radius: 3px;
  background: #4a92e6;
  display: flex;
  align-items: center;
  justify-content: center;
  flex: none;
}

.sector-name {
  margin-left: 22px;
  font-weight: 700;
  font-size: 20px;
}

.sector-chevron {
  margin-left: auto;
  margin-right: 36px;
  margin-top: -8px;
}

.driver {
  box-sizing: border-box;
  height: 131px;
  margin: 14px 3px 0 2px;
  border: 1px solid #e2e2e2;
  border-radius: 3px;
  box-shadow: 0 1px 2px rgba(0, 0, 0, 0.08);
  display: flex;
  flex-direction: column;
}

.driver-head {
  height: 61px;
  background: #efefef;
  display: flex;
  align-items: center;
  padding-left: 15px;
}

.dot {
  width: 33px;
  height: 33px;
  box-sizing: border-box;
  border: 2px solid #1a1a22;
  border-radius: 50%;
  margin-left: 15px;
  flex: none;
}

.driver-name {
  margin-left: 13px;
  font-size: 19.300px;
  letter-spacing: 0.2px;
}

.more {
  margin-left: auto;
  margin-right: 40px;
  display: flex;
  gap: 6px;
}

.more i {
  width: 4px;
  height: 4px;
  border-radius: 50%;
  background: #222;
}

.stats {
  flex: 1;
  display: grid;
  grid-template-columns: repeat(7, 1fr);
  align-items: center;
  color: #666;
  font-size: 16px;
}

.stat {
  display: flex;
  align-items: center;
  justify-content: center;
  gap: 6px;
  white-space: nowrap;
}

.stat-icon {
  flex: none;
  color: #555;
}
</style>
